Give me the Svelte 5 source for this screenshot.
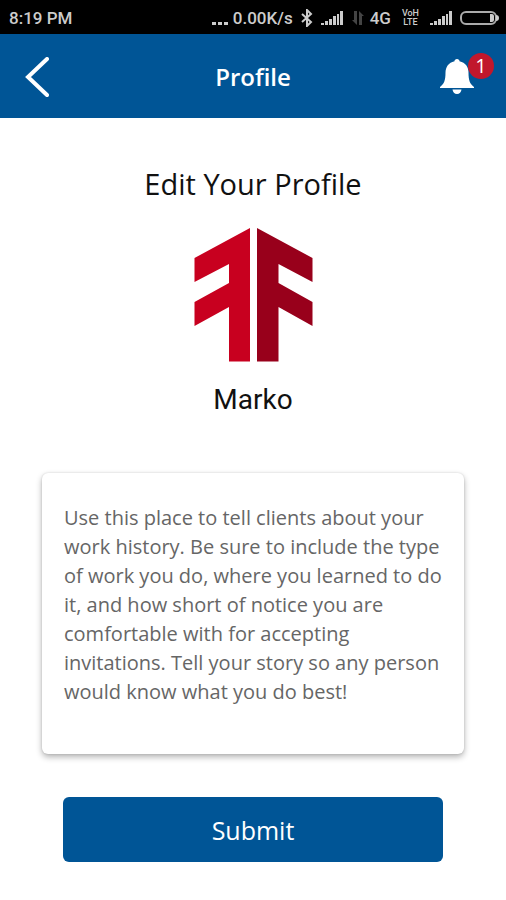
<script lang="ts">
	let name = $state('Marko')
	let notifications = $state(1)
	let bio = $state(
		'Use this place to tell clients about your work history. Be sure to include the type of work you do, where you learned to do it, and how short of notice you are comfortable with for accepting invitations. Tell your story so any person would know what you do best!'
	)

	function handleSubmit(e: SubmitEvent) {
		e.preventDefault()
		bio = bio.trim()
	}
</script>

{#snippet signal()}
	<svg class="signal" viewBox="0 0 22 16" width="22" height="16" aria-hidden="true">
		<path d="M0 15v-2h3v2zM4 15v-4h3v4zM8 15V9h3v6zM12 15V6h3v9zM16 15V4h2v11zM19 15V1h3v14z" />
	</svg>
{/snippet}

<div class="status">
	<span>8:19 PM</span>
	<div class="status-icons">
		<div class="net">
			<svg viewBox="0 0 16 16" width="16" height="16" aria-hidden="true">
				<path d="M0 12h4v3H0zM6 12h4v3H6zM12 12h4v3h-4z" />
			</svg>
			<span>0.00K/s</span>
		</div>
		<svg viewBox="0 0 12 18" width="12" height="18" aria-hidden="true">
			<path class="line" d="M1 5l9 8-4 4V1l4 4-9 8" />
		</svg>
		{@render signal()}
		<div class="net">
			<svg class="dim" viewBox="0 0 14 16" width="14" height="16" aria-hidden="true">
				<path d="M3 1h3v14L1 10h2zM8 1l5 5h-2v9H8z" />
			</svg>
			<span>4G</span>
		</div>
		<div class="volte"><span>VoH</span><span>LTE</span></div>
		{@render signal()}
		<svg viewBox="0 0 39 16" width="39" height="16" aria-hidden="true">
			<rect class="battery" x="1" y="2" width="35" height="12" rx="5" />
			<path d="M30 4h2q2 0 2 2v4q0 2-2 2h-2zM36 5q3 0 3 3t-3 3z" />
		</svg>
	</div>
</div>

<header class="bar">
	<button class="back" type="button" aria-label="Back">
		<svg viewBox="0 0 24 40" width="24" height="40" aria-hidden="true">
			<path d="M22 2L3 20l19 18" />
		</svg>
	</button>
	<h1>Profile</h1>
	<button class="bell" type="button" aria-label="Notifications">
		<svg viewBox="0 0 34 36" width="34" height="36" aria-hidden="true">
			<path d="M17 0c1.500 0 2.500 1 2.500 2.200 6 1.300 9 5.800 9 11.300 0 8 1.500 11.500 5.500 14.500v1H0v-1c4-3 5.500-6.500 5.500-14.500 0-5.500 3-10 9-11.300C14.500 1 15.500 0 17 0zM12.500 30.500h9c-.3 2.500-2 4.500-4.500 4.500s-4.200-2-4.500-4.500z" />
		</svg>
		{#if notifications > 0}
			<span class="badge">{notifications}</span>
		{/if}
	</button>
</header>

<main>
	<h2>Edit Your Profile</h2>
	<svg class="logo" viewBox="0 0 120 136" width="120" height="136" aria-hidden="true">
		<path class="logo-left" d="M57 1v133.500H36V80L1.500 99V75L36 56V37L1.500 55V31z" />
		<path class="logo-right" d="M64 1v133.500H85.500V80l34 19V75L85.500 56V37l34 18V31z" />
	</svg>
	<p class="name">{name}</p>

	<form onsubmit={handleSubmit}>
		<textarea aria-label="About you" spellcheck="false" bind:value={bio}></textarea>
		<button class="submit" type="submit">Submit</button>
	</form>
</main>

<style>
	:global(body) {
		margin: 0;
		background: #fff;
		color: #111;
		font-family: 'Open Sans', 'Noto Sans', sans-serif;
	}

	.status {
		display: flex;
		align-items: center;
		justify-content: space-between;
		height: 34px;
		padding: 2px 7px 0 9px;
		box-sizing: border-box;
		background: #000;
		color: #ccc;
		font: 500 17px/20px Roboto, sans-serif;
	}

	.status svg {
		display: block;
		fill: #ccc;
	}

	.status-icons {
		display: flex;
		align-items: center;
		gap: 8px;
	}

	.net {
		display: flex;
		align-items: center;
		gap: 5px;
	}

	.status .dim {
		fill: #444;
	}

	.status .line {
		fill: none;
		stroke: #ccc;
		stroke-width: 2;
	}

	.status .battery {
		fill: none;
		stroke: #aaa;
		stroke-width: 2;
	}

	.volte {
		display: flex;
		flex-direction: column;
		align-items: center;
		padding: 0 3px;
		font-size: 9px;
		font-weight: 500;
		line-height: 9px;
	}

	.bar {
		display: grid;
		grid-template-columns: 66px 1fr 66px;
		align-items: center;
		height: 84px;
		padding-top: 2px;
		box-sizing: border-box;
		background: #005596;
		color: #fff;
	}

	h1 {
		margin: 0;
		font-size: 24px;
		font-weight: 600;
		line-height: 32px;
		text-align: center;
	}

	button {
		border: 0;
		font-family: inherit;
		color: #fff;
		cursor: pointer;
	}

	.back,
	.bell {
		position: relative;
		padding: 0;
		background: none;
	}

	.back {
		justify-self: end;
		margin-right: 17px;
	}

	.bell {
		justify-self: start;
	}

	.back svg,
	.bell svg {
		display: block;
	}

	.back path {
		fill: none;
		stroke: #fff;
		stroke-width: 4;
		stroke-linecap: round;
	}

	.bell path {
		fill: #fff;
	}

	.badge {
		position: absolute;
		top: -6px;
		right: -20px;
		width: 26px;
		height: 26px;
		border-radius: 50%;
		background: #c1172c;
		font-size: 20px;
		line-height: 26px;
		text-align: center;
	}

	main {
		display: flex;
		flex-direction: column;
		align-items: center;
		padding: 48px 42px 38px;
	}

	h2 {
		margin: 0;
		font-size: 29px;
		font-weight: 400;
		line-height: 36px;
	}

	.logo {
		margin-top: 25px;
	}

	.logo-left {
		fill: #c8001f;
	}

	.logo-right {
		fill: #98001b;
	}

	.name {
		margin: 19px 0 55px;
		font: 400 28px/36px Roboto, sans-serif;
	}

	form {
		display: flex;
		flex-direction: column;
		width: 100%;
	}

	textarea {
		height: 281px;
		box-sizing: border-box;
		padding: 30px 16px 30px 22px;
		border: 0;
		border-radius: 6px;
		outline: none;
		resize: none;
		overflow: hidden;
		background: #fff;
		box-shadow: 0 3px 6px rgba(0, 0, 0, 0.3), 0 0 2px rgba(0, 0, 0, 0.15);
		color: #666;
		font-family: inherit;
		font-size: 20px;
		line-height: 29px;
	}

	.submit {
		height: 65px;
		margin: 43px 21px 0;
		border-radius: 6px;
		background: #005596;
		font-size: 25px;
		line-height: 32px;
	}
</style>
